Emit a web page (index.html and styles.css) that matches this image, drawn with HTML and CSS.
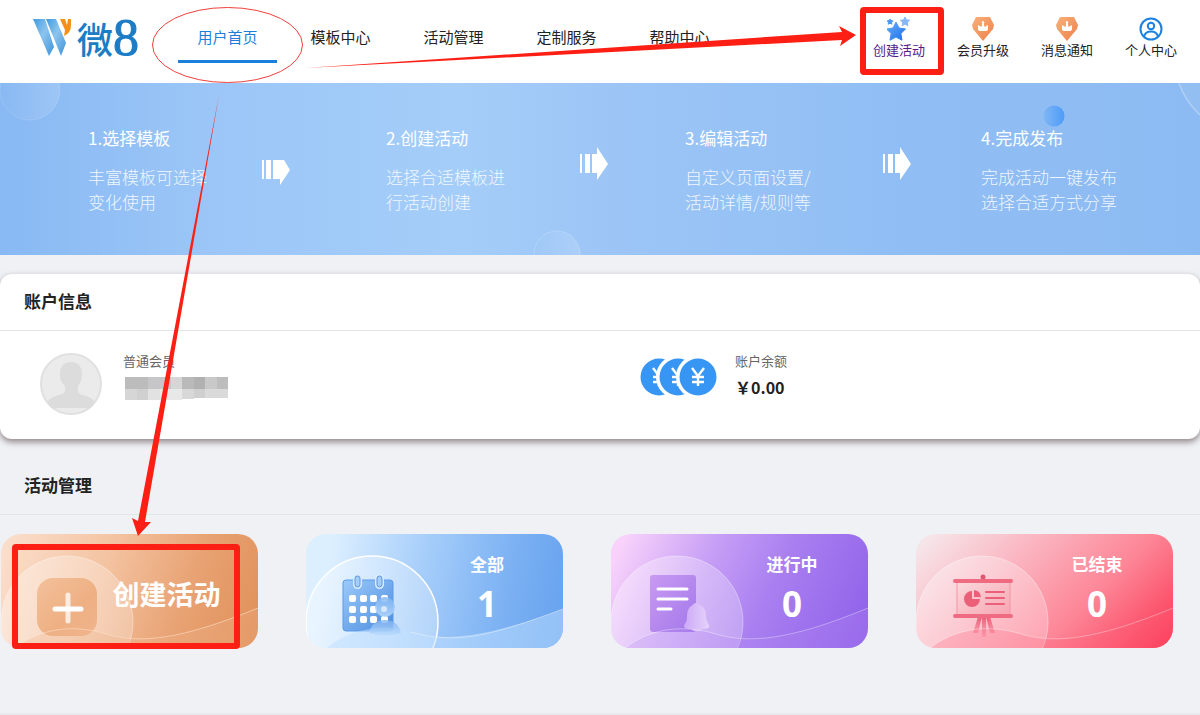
FILE: index.html
```html
<!DOCTYPE html>
<html lang="zh-CN">
<head>
  <meta charset="UTF-8">
  <meta name="viewport" content="width=device-width, initial-scale=1.0">
  <title>微8</title>
  <link rel="stylesheet" href="styles.css">
</head>
<body>
  <header class="header">
    <a class="logo" href="#">
      <svg class="logo-mark" width="40" height="40" viewBox="0 0 40 40">
        <defs>
          <linearGradient id="w" x1="0" y1="0" x2="1" y2="1">
            <stop offset="0" stop-color="#3f9ade"/><stop offset=".45" stop-color="#8cc4ee"/><stop offset="1" stop-color="#3b92d8"/>
          </linearGradient>
        </defs>
        <path d="M0 1H12L21 29 16 38Z" fill="url(#w)"/>
        <path d="M13 1H23L33 25 28 38Z" fill="url(#w)"/>
        <path d="M27 1H32L34 7 35 1H38V7Q38 15 31 18L32 12Z" fill="#f39018"/>
      </svg>
      <span class="logo-text">微</span><span class="logo-num">8</span>
    </a>
    <nav class="nav">
      <a class="nav-link active" href="#">用户首页</a>
      <a class="nav-link" href="#">模板中心</a>
      <a class="nav-link" href="#">活动管理</a>
      <a class="nav-link" href="#">定制服务</a>
      <a class="nav-link" href="#">帮助中心</a>
    </nav>
    <div class="tools">
      <a class="tool visited" href="#">
        <svg width="24" height="24" viewBox="0 0 24 24">
          <defs><linearGradient id="star" x1="0" y1="0" x2="1" y2="1"><stop offset="0" stop-color="#65adff"/><stop offset="1" stop-color="#1f6fe8"/></linearGradient></defs>
          <path d="M9 5l3 6 6.500 1-4.600 4.600 1.100 6.600L9 20l-6 3.200 1.100-6.600L-.5 12 6 11z" fill="url(#star)" stroke="url(#star)" stroke-linejoin="round"/>
          <path d="M18 0l1.400 2.900 3.200.4-2.400 2.200.7 3.200L18 7.100l-2.900 1.600.7-3.200-2.400-2.200 3.200-.4z" fill="#84b8f8" stroke="#84b8f8" stroke-linejoin="round"/>
          <path d="M3 2l1 1.600 1.900.2-1.400 1.400.4 2L3 6.200l-1.800 1 .3-2L.2 3.800l1.900-.2z" fill="#4a97f5" stroke="#4a97f5" stroke-linejoin="round"/>
        </svg>
        <span>创建活动</span>
      </a>
      <a class="tool" href="#">
        <svg width="24" height="24" viewBox="0 0 24 24">
          <defs><linearGradient id="gem" x1="0" y1="0" x2="1" y2="1"><stop offset="0" stop-color="#fbb07c"/><stop offset="1" stop-color="#ec8048"/></linearGradient></defs>
          <path d="M5 0h14l4 8-1 4-10 12L2 12 1 8z" fill="url(#gem)"/>
          <path d="M7 12V8l3.500 2 .7-3.500a1.300 1.300 0 1 1 1.600 0l.7 3.500L17 8v4q0 2-2 2H9q-2 0-2-2z" fill="#fff"/>
        </svg>
        <span>会员升级</span>
      </a>
      <a class="tool" href="#">
        <svg width="24" height="24" viewBox="0 0 24 24">
          <path d="M5 0h14l4 8-1 4-10 12L2 12 1 8z" fill="url(#gem)"/>
          <path d="M7 12V8l3.500 2 .7-3.500a1.300 1.300 0 1 1 1.600 0l.7 3.500L17 8v4q0 2-2 2H9q-2 0-2-2z" fill="#fff"/>
        </svg>
        <span>消息通知</span>
      </a>
      <a class="tool" href="#">
        <svg width="24" height="24" viewBox="0 0 24 24" fill="none" stroke="#1b82e0" stroke-width="2">
          <circle cx="12" cy="12" r="10.500"/>
          <circle cx="12" cy="9" r="3.200"/>
          <path d="M5 19.500c1-4 4-5 7-5s6 1 7 5"/>
        </svg>
        <span>个人中心</span>
      </a>
    </div>
  </header>

  <section class="banner">
    <svg class="banner-art" width="100%" height="100%" viewBox="0 0 1200 172" preserveAspectRatio="none">
      <defs>
        <linearGradient id="bub" x1="0" y1="0" x2="1" y2="0"><stop offset="0" stop-color="#fff" stop-opacity="0"/><stop offset="1" stop-color="#fff" stop-opacity=".14"/></linearGradient>
        <linearGradient id="ball" x1="0" y1="0" x2="1" y2="0"><stop offset="0" stop-color="#4c9cf8" stop-opacity=".2"/><stop offset="1" stop-color="#4c9cf8"/></linearGradient>
      </defs>
      <circle cx="30" cy="7" r="30" fill="url(#bub)" stroke="#fff" stroke-opacity=".12"/>
      <circle cx="557" cy="171" r="23" fill="url(#bub)" stroke="#fff" stroke-opacity=".18"/>
      <circle cx="1054" cy="33" r="10.500" fill="url(#ball)"/>
      <path d="M1179 0Q1185 18 1200 32V0Z" fill="#fff" fill-opacity=".06"/>
      <path d="M1179 0Q1185 18 1200 32" fill="none" stroke="#fff" stroke-opacity=".3" stroke-width="1.500"/>
    </svg>
    <div class="step">
      <h2>1.选择模板</h2>
      <p>丰富模板可选择<br>变化使用</p>
    </div>
    <svg class="step-arrow" width="30" height="44" viewBox="0 0 30 44" fill="#fff">
      <path d="M0 18h2v19H0zM4 18h5v19H4zM11 18h11l6 10-10 15v-6h-7z"/>
    </svg>
    <div class="step">
      <h2>2.创建活动</h2>
      <p>选择合适模板进<br>行活动创建</p>
    </div>
    <svg class="step-arrow" width="30" height="44" viewBox="0 0 30 44" fill="#fff">
      <path d="M0 12h2v19H0zM5 12h5v19H5zM12 12h5V5l11 17-11 16v-7h-5z"/>
    </svg>
    <div class="step">
      <h2>3.编辑活动</h2>
      <p>自定义页面设置/<br>活动详情/规则等</p>
    </div>
    <svg class="step-arrow" width="30" height="44" viewBox="0 0 30 44" fill="#fff">
      <path d="M0 12h2v19H0zM5 12h5v19H5zM12 12h5V5l11 17-11 16v-7h-5z"/>
    </svg>
    <div class="step">
      <h2>4.完成发布</h2>
      <p>完成活动一键发布<br>选择合适方式分享</p>
    </div>
  </section>

  <section class="account">
    <h3 class="section-title">账户信息</h3>
    <div class="account-body">
      <div class="account-item user">
        <svg width="62" height="64" viewBox="0 0 62 64">
          <circle cx="31" cy="33" r="30" fill="#ebebeb" stroke="#e0e0e0" stroke-width="2"/>
          <path d="M31 11c8 0 11 5 11 12 0 6-2 9-4 12v6c2 4 12 3 16 9 0 3-2 6-4 7H12c-2-1-4-4-4-7 4-6 14-5 17-9v-6c-3-3-5-6-5-12 0-7 3-12 11-12z" fill="#dcdcdc"/>
        </svg>
        <div class="account-text">
          <span>普通会员</span>
          <!-- masked user name -->
          <svg class="mask" width="106" height="24" viewBox="0 0 106 24" shape-rendering="crispEdges">
            <path d="M2 0h23v12H2z" fill="#bcbcbc"/><path d="M25 0h23v12H25z" fill="#c6c6c8"/>
            <path d="M48 0h11v12H48z" fill="#d6d6d6"/><path d="M59 0h12v12H59z" fill="#b9b9b9"/>
            <path d="M71 0h11v12H71z" fill="#b1b1b1"/><path d="M82 0h12v12H82z" fill="#c9c9c9"/><path d="M94 0h11v12H94z" fill="#bdbdbd"/>
            <path d="M2 12h12v11H2z" fill="#d6d6d6"/><path d="M14 12h11v11H14z" fill="#d0d0d0"/>
            <path d="M25 12h12v11H25z" fill="#e2e2e2"/><path d="M37 12h22v11H37z" fill="#e8e8e8"/>
            <path d="M59 12h12v10H59z" fill="#d8d8d8"/><path d="M71 12h11v9H71z" fill="#cfcfcf"/><path d="M82 12h23v9H82z" fill="#dadada"/>
          </svg>
        </div>
      </div>
      <div class="account-item balance">
        <svg width="78" height="64" viewBox="0 0 78 64">
          <g id="coin">
            <circle cx="19" cy="26" r="22" fill="#fff"/>
            <circle cx="19" cy="26" r="18.500" fill="#3795f3"/>
            <path d="M13 17l6 8 6-8M19 25v10M13 26h12M13 31h12" fill="none" stroke="#fff" stroke-width="2.400"/>
          </g>
          <use href="#coin" x="19"/>
          <use href="#coin" x="39"/>
        </svg>
        <div class="account-text">
          <span>账户余额</span>
          <strong>￥0.00</strong>
        </div>
      </div>
    </div>
  </section>

  <section class="activity">
    <h3 class="section-title">活动管理</h3>
    <div class="cards">
      <a class="card create" href="#">
        <svg class="card-art" viewBox="0 0 257 114" preserveAspectRatio="xMinYMin slice">
          <defs>
            <linearGradient id="o1" x1="0" y1="0" x2="1" y2="1"><stop offset="0" stop-color="#f3c09a"/><stop offset=".6" stop-color="#eeb083"/><stop offset="1" stop-color="#f0b48c"/></linearGradient>
            <linearGradient id="fade" x1="0" y1="0" x2="1" y2="0"><stop offset="0" stop-color="#fff" stop-opacity=".35"/><stop offset="1" stop-color="#fff" stop-opacity=".25"/></linearGradient>
          </defs>
          <circle cx="66" cy="88" r="66" fill="url(#fade)" stroke="#fff" stroke-opacity=".35"/>
          <rect x="36" y="44" width="60" height="58" rx="16" fill="url(#o1)"/>
          <path d="M67 61v26" stroke="#fff" stroke-opacity=".75" stroke-width="5" stroke-linecap="round"/>
          <path d="M54 75h26" stroke="#fff" stroke-width="5" stroke-linecap="round"/>
          <path d="M14 114C40 94 72 90 105 100S180 106 257 74V114Z" fill="#f0b48a" fill-opacity=".3"/>
          <path d="M14 114C40 94 72 90 105 100S180 106 257 74" fill="none" stroke="#ffe0c8" stroke-opacity=".6"/>
        </svg>
        <span class="card-name">创建活动</span>
      </a>
      <a class="card all" href="#">
        <svg class="card-art" viewBox="0 0 257 114" preserveAspectRatio="xMinYMin slice">
          <defs>
            <linearGradient id="b1" x1="0" y1="0" x2="1" y2="1"><stop offset="0" stop-color="#9ccbfa"/><stop offset="1" stop-color="#4c8be0"/></linearGradient>
            <linearGradient id="b2" x1="0" y1="0" x2="0" y2="1"><stop offset="0" stop-color="#7fb4f2"/><stop offset="1" stop-color="#b9dafc"/></linearGradient>
          </defs>
          <circle cx="66" cy="88" r="66" fill="url(#fade)" stroke="#fff" stroke-width="1.500"/>
          <rect x="37" y="46" width="50" height="51" rx="3" fill="url(#b1)" stroke="#5b9be8"/>
          <g fill="#9fc9f8" stroke="#d9ecff" stroke-width="4"><rect x="49" y="42" width="5" height="11" rx="2.500"/><rect x="71" y="42" width="5" height="11" rx="2.500"/></g>
          <g fill="#a5cdf8" stroke="#5b95dc"><rect x="49" y="42" width="5" height="11" rx="2.500"/><rect x="71" y="42" width="5" height="11" rx="2.500"/></g>
          <g fill="#fff"><rect x="43" y="61" width="7" height="7" rx="2"/><rect x="54" y="61" width="7" height="7" rx="2"/><rect x="64" y="61" width="7" height="7" rx="2"/><rect x="75" y="61" width="7" height="7" rx="2"/><rect x="43" y="72" width="7" height="7" rx="2"/><rect x="54" y="72" width="7" height="7" rx="2"/><rect x="64" y="72" width="7" height="7" rx="2"/><rect x="43" y="82" width="7" height="7" rx="2"/><rect x="54" y="82" width="7" height="7" rx="2"/><rect x="64" y="82" width="7" height="7" rx="2"/><rect x="75" y="82" width="7" height="7" rx="2"/></g>
          <circle cx="79" cy="73" r="10" fill="url(#b2)" fill-opacity=".85"/>
          <circle cx="78" cy="75" r="3" fill="#fff" fill-opacity=".6"/>
          <path d="M21 114C42 96 76 88 105 98S180 104 257 75V114Z" fill="#bfe0ff" fill-opacity=".5"/>
          <path d="M63 99c2-9 8-13 16-13s14 4 16 13q-16 5-32 0z" fill="url(#b2)" fill-opacity=".8"/>
          <path d="M105 98C148 110 180 104 257 75" fill="none" stroke="#fff" stroke-opacity=".4"/>
        </svg>
        <span class="card-label">全部</span>
        <span class="card-num">1</span>
      </a>
      <a class="card running" href="#">
        <svg class="card-art" viewBox="0 0 257 114" preserveAspectRatio="xMinYMin slice">
          <defs>
            <linearGradient id="p1" x1="0" y1="0" x2="1" y2="1"><stop offset="0" stop-color="#c99af2"/><stop offset="1" stop-color="#a277ea"/></linearGradient>
            <linearGradient id="p2" x1="0" y1="0" x2="1" y2="0"><stop offset="0" stop-color="#cba9f6"/><stop offset="1" stop-color="#e6d2fb"/></linearGradient>
          </defs>
          <circle cx="66" cy="88" r="66" fill="url(#fade)" stroke="#fff" stroke-opacity=".35"/>
          <rect x="39" y="41" width="46" height="57" rx="3" fill="url(#p1)"/>
          <path d="M47 55h29M47 65h29M47 75h13" stroke="#fff" stroke-width="3" stroke-linecap="round"/>
          <path d="M14 114C40 94 72 90 105 100S180 106 257 74V114Z" fill="#b98cf2" fill-opacity=".25"/>
          <path d="M85 69c2 0 3 1 3 2 6 2 7 6 7 11 0 7 4 8 3 11-1 2-5 2-7 2-1 3-9 3-11 0-3 0-7 0-7-3 0-2 3-3 3-9 0-5 1-10 6-12 0-1 1-2 3-2z" fill="url(#p2)"/>
          <path d="M14 114C40 94 72 90 105 100S180 106 257 74" fill="none" stroke="#fff" stroke-opacity=".35"/>
        </svg>
        <span class="card-label">进行中</span>
        <span class="card-num">0</span>
      </a>
      <a class="card ended" href="#">
        <svg class="card-art" viewBox="0 0 257 114" preserveAspectRatio="xMinYMin slice">
          <defs>
            <linearGradient id="r1" x1="0" y1="0" x2="1" y2="1"><stop offset="0" stop-color="#fbd9dc"/><stop offset="1" stop-color="#f7a5b2"/></linearGradient>
            <linearGradient id="r2" x1="0" y1="0" x2="0" y2="1"><stop offset="0" stop-color="#ee5f7a"/><stop offset="1" stop-color="#ee5f7a" stop-opacity=".2"/></linearGradient>
          </defs>
          <circle cx="66" cy="88" r="66" fill="url(#fade)" stroke="#fff" stroke-opacity=".4"/>
          <path d="M62 83h4l-4 16h-5zM66 83h4v20h-4zM70 83h4l5 16h-5z" fill="url(#r2)"/>
          <rect x="41" y="48" width="53" height="33" fill="url(#r1)" stroke="#f296a5"/>
          <circle cx="67" cy="43" r="2.500" fill="#e2566f"/>
          <path d="M39 47h56M39 82h56" stroke="#ee6b82" stroke-width="4" stroke-linecap="round"/>
          <path d="M56 57v8h8a8 8 0 1 1-8-8z" fill="#ec5f78"/>
          <path d="M58 56a8 8 0 0 1 7 7h-7z" fill="#ec5f78"/>
          <path d="M70 58h18M70 64h18M70 70h18" stroke="#ec5f78" stroke-width="2" stroke-linecap="round"/>
          <path d="M14 114C40 94 72 90 105 100S180 106 257 74V114Z" fill="#ff5f7a" fill-opacity=".25"/>
          <path d="M14 114C40 94 72 90 105 100S180 106 257 74" fill="none" stroke="#fff" stroke-opacity=".35"/>
        </svg>
        <span class="card-label">已结束</span>
        <span class="card-num">0</span>
      </a>
    </div>
  </section>
  <div class="next-section"></div>

  <!-- guide marks drawn over the page -->
  <svg class="marks" width="1200" height="715" viewBox="0 0 1200 715">
    <ellipse cx="227.500" cy="45" rx="75" ry="37.500" fill="none" stroke="#f0403c"/>
    <g fill="#fd1f14">
      <path d="M305 68L842 32 839 26 856 35 840 46 842 40Z"/>
      <path d="M219 95L138 521 132 518 138 536 151 522 145 522Z"/>
    </g>
    <g fill="none" stroke="#fd1f14" stroke-linejoin="round">
      <rect x="863" y="10" width="78" height="62" stroke-width="6" rx="1"/>
      <rect x="15" y="547" width="222" height="99" stroke-width="6" rx="1"/>
    </g>
  </svg>
</body>
</html>
```

FILE: styles.css
```css
* {
  box-sizing: border-box;
}

body {
  margin: 0;
  font-family: "Noto Sans CJK SC", "Liberation Sans", sans-serif;
  background: #eff1f5;
  color: #222;
  position: relative;
}

a {
  color: inherit;
  text-decoration: none;
}

h2, h3, p {
  margin: 0;
}

.header {
  display: flex;
  height: 83px;
  background: #fff;
}

.logo {
  display: flex;
  flex: none;
  width: 178px;
  padding: 18px 0 0 33px;
  color: #1c7cc6;
  line-height: 40px;
}

.logo-mark {
  margin-right: 4px;
}

.logo-text {
  font-size: 36px;
  font-weight: 500;
}

.logo-num {
  font-family: "Liberation Serif", serif;
  font-size: 52px;
  -webkit-text-stroke: 1px #1c7cc6;
}

.nav {
  display: flex;
  align-items: flex-start;
  gap: 14px;
}

.nav-link {
  width: 99px;
  padding: 26px 0 12px;
  border-bottom: 3px solid transparent;
  font-size: 15px;
  line-height: 22px;
  text-align: center;
  white-space: nowrap;
}

.nav-link.active {
  color: #1b7fdc;
  border-color: #1b7fdc;
}

.tools {
  display: flex;
  margin-left: auto;
  padding: 17px 7px 0 0;
}

.tool {
  display: flex;
  flex-direction: column;
  align-items: center;
  width: 84px;
  font-size: 13px;
  line-height: 18px;
  white-space: nowrap;
}

.tool.visited {
  color: #551a8b;
}

.banner {
  position: relative;
  display: grid;
  grid-template-columns: 174fr 124fr 194fr 105fr 198fr 98fr 219fr;
  height: 172px;
  padding: 42px 0 0 88px;
  background: linear-gradient(90deg, #88b9f3 0%, #9cc6f7 18%, #a4cdf9 38%, #9cc5f6 52%, #90bef4 75%, #8cbaf2 100%);
  color: #fff;
}

.banner-art {
  position: absolute;
  left: 0;
  top: 0;
}

.step {
  position: relative;
  font-size: 17px;
  line-height: 25px;
  white-space: nowrap;
}

.step h2 {
  margin-bottom: 14px;
  font-size: 17px;
  font-weight: 400;
}

.step p {
  font-weight: 300;
  opacity: 0.85;
}

.step-arrow {
  position: relative;
  margin-top: 17px;
}

.section-title {
  padding: 0 24px 2px;
  border-bottom: 1px solid #e3e4e7;
  font-size: 17px;
  font-weight: 600;
  line-height: 54px;
}

.account {
  margin-top: 19px;
  background: #fff;
  border-radius: 12px;
  box-shadow: 0 3px 6px rgba(80, 60, 60, 0.6);
}

.account-body {
  display: grid;
  grid-template-columns: 1fr 1fr;
  height: 108px;
  padding-top: 20px;
}

.account-item {
  display: flex;
  align-items: flex-start;
  gap: 21px;
  padding-left: 40px;
}

.account-text {
  display: flex;
  flex-direction: column;
  gap: 4px;
  color: #666;
  font-size: 13px;
  line-height: 20px;
}

.account-text strong {
  color: #222;
  font-size: 16px;
  line-height: 24px;
}

.mask {
  margin-top: 2px;
}

.balance {
  gap: 17px;
}

.activity {
  margin-top: 19px;
}

.cards {
  display: grid;
  grid-template-columns: repeat(4, 1fr);
  gap: 48px;
  padding: 19px 27px 0 1px;
}

.card {
  position: relative;
  display: flex;
  flex-direction: column;
  height: 114px;
  padding: 18px 0 0 105px;
  border-radius: 20px;
  overflow: hidden;
  color: #fff;
  font-weight: bold;
  text-align: center;
}

.card-art {
  position: absolute;
  left: 0;
  top: 0;
  width: 100%;
  height: 100%;
}

.card-label,
.card-num,
.card-name {
  position: relative;
}

.card-label {
  font-size: 17px;
  line-height: 24px;
}

.card-num {
  font-family: "Open Sans", "Noto Sans", sans-serif;
  font-size: 35px;
  line-height: 56px;
}

.card-name {
  font-size: 27px;
  line-height: 84px;
}

.create {
  padding-left: 74px;
  background: linear-gradient(110deg, #fbe0cf 0%, #f4c4a2 38%, #e8a273 70%, #e09058 100%);
}

.all {
  background: linear-gradient(100deg, #dcefff 10%, #a5cdfa 45%, #7db2f3 75%, #66a2ee 100%);
}

.running {
  background: linear-gradient(115deg, #f8d2fb 5%, #c79ff6 35%, #a97ff0 60%, #8e5fe9 100%);
}

.ended {
  background: linear-gradient(135deg, #f6e4e8 5%, #fbb3bf 35%, #fd8596 65%, #fb3552 100%);
}

.next-section {
  height: 2px;
  margin-top: 65px;
  background: #e8e9ec;
}

.marks {
  position: absolute;
  left: 0;
  top: 0;
  pointer-events: none;
}
```
